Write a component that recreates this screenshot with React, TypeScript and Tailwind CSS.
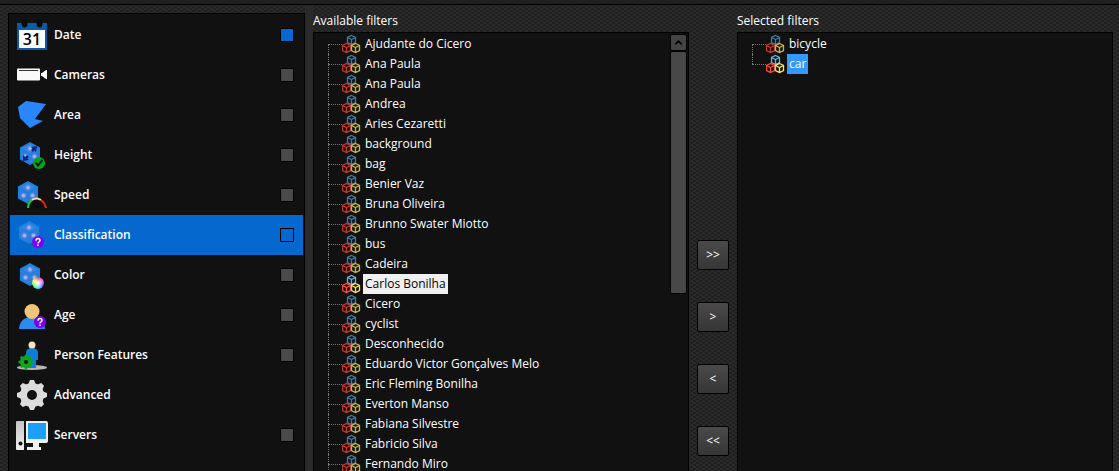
import type { ReactNode } from "react";
import { ChevronUp } from "lucide-react";

type Mark = "on" | "off" | "none";

interface Category {
  label: string;
  icon: ReactNode;
  mark: Mark;
}

function CubeDefs() {
  return (
    <svg className="absolute size-0" aria-hidden="true">
      <defs>
        <radialGradient id="pip">
          <stop offset="0" stopColor="#a9c6fa" />
          <stop offset="0.4" stopColor="#8aaef2" />
          <stop offset="1" stopColor="#4a7ddd" stopOpacity="0" />
        </radialGradient>
        <linearGradient id="steel" x1="0" y1="0" x2="0" y2="1">
          <stop offset="0" stopColor="#c4c4c4" />
          <stop offset="1" stopColor="#f0f0f0" />
        </linearGradient>
      </defs>
    </svg>
  );
}

function Cube({ x = 0, y = 0 }: { x?: number; y?: number }) {
  return (
    <g transform={`translate(${x} ${y})`}>
      <path d="M10 0 20 5.500v12L10 23 0 17.500v-12z" fill="#1385e2" />
      <path d="M10 2 18 6.500 10 11 2 6.500z" fill="#4280df" />
      <path d="M1.500 8 9.500 12.500v8.500l-8-4.500zM18.500 8l-8 4.500v8.500l8-4.500z" fill="#3f77d6" />
      <circle cx="10" cy="6.500" r="3.500" fill="url(#pip)" />
      <circle cx="5.500" cy="14.500" r="3.500" fill="url(#pip)" />
      <circle cx="14.500" cy="14.500" r="3.500" fill="url(#pip)" />
    </g>
  );
}

function Question({ x, y }: { x: number; y: number }) {
  return (
    <g transform={`translate(${x} ${y})`}>
      <circle r="6" fill="#7a00f5" />
      <path d="M-2-1.200q0-2.300 2-2.300t2 1.800q0 1-1 1.600T0 1.600M0 2.400v1.600" fill="none" stroke="#fff" strokeWidth="1.500" />
    </g>
  );
}

function Icon({ children }: { children: ReactNode }) {
  return (
    <svg viewBox="0 0 32 32" className="size-8 shrink-0" aria-hidden="true">
      {children}
    </svg>
  );
}

const gearTeeth = [0, 45, 90, 135, 180, 225, 270, 315];

const categories: Category[] = [
  {
    label: "Date",
    mark: "on",
    icon: (
      <div className="relative size-8 shrink-0">
        <Icon>
          <path d="M1 4h30v27H1z" fill="#0a5ca8" />
          <path d="M3 11h26v18H3z" fill="#fff" />
          <ellipse cx="8.500" cy="4.500" rx="3" ry="4" fill="#0a0a0a" />
          <ellipse cx="23.500" cy="4.500" rx="3" ry="4" fill="#0a0a0a" />
        </Icon>
        <span className="absolute inset-x-0 top-3 text-center text-base leading-4 text-black">31</span>
      </div>
    ),
  },
  {
    label: "Cameras",
    mark: "off",
    icon: (
      <Icon>
        <rect x="1" y="9.500" width="23" height="12" rx="1" fill="#fafafa" />
        <path d="M3 11.500h19" stroke="#333" />
        <path d="M25 14h1l4-3h1v9h-1l-4-3h-1z" fill="#fafafa" />
      </Icon>
    ),
  },
  {
    label: "Area",
    mark: "off",
    icon: (
      <Icon>
        <path d="M2 8 10 2l20 3-11 15 8 2-13 7L4 19z" fill="#2a86ff" />
      </Icon>
    ),
  },
  {
    label: "Height",
    mark: "off",
    icon: (
      <Icon>
        <Cube x={4} y={3} />
        <path d="m9 20 3-3M16 12l3-3" stroke="#06277f" strokeWidth="2.500" />
        <path d="m15 8 6-1-1 6zM7 16v6l6-1z" fill="#06277f" />
        <circle cx="23" cy="24" r="6" fill="#08a51b" />
        <path d="m19.500 23.500 2.500 3 4.500-5.500" fill="none" stroke="#05240a" strokeWidth="2" />
      </Icon>
    ),
  },
  {
    label: "Speed",
    mark: "off",
    icon: (
      <Icon>
        <Cube x={2} y={2} />
        <path d="M11 29a9.500 9.500 0 0 1 19 0z" fill="#0c0c0c" />
        <g fill="none" strokeWidth="2">
          <path d="M12 29q0-5 4-8" stroke="#12d61d" />
          <path d="M16 21q4.500-3 9 0" stroke="#f3e3a0" />
          <path d="M25 21q4 3 5 8" stroke="#e32020" />
        </g>
        <path d="m19 28 6-2-3 3z" fill="#000" />
      </Icon>
    ),
  },
  {
    label: "Classification",
    mark: "off",
    icon: (
      <Icon>
        <Cube x={3} y={2} />
        <Question x={22} y={23} />
      </Icon>
    ),
  },
  {
    label: "Color",
    mark: "off",
    icon: (
      <div className="relative size-8 shrink-0">
        <Icon>
          <Cube x={4} y={4} />
        </Icon>
        <span className="absolute bottom-0.5 right-1 size-3 rounded-full bg-[radial-gradient(circle,#fff_10%,transparent_70%),conic-gradient(#f33,#f4f,#55f,#3df,#4f4,#ff4,#f33)]" />
      </div>
    ),
  },
  {
    label: "Age",
    mark: "off",
    icon: (
      <Icon>
        <path d="M3 30q1-12 13-12t13 12z" fill="#2a8cf0" />
        <circle cx="16" cy="12.500" r="7.500" fill="#efc57c" />
        <Question x={24} y={23} />
      </Icon>
    ),
  },
  {
    label: "Person Features",
    mark: "off",
    icon: (
      <Icon>
        <ellipse cx="16" cy="28.500" rx="15" ry="2.500" fill="#b5b5b5" />
        <path d="M10 21v-7q0-5 6-5t6 5v7h-2v8h-8v-8z" fill="#0e7cd8" />
        <circle cx="16" cy="6" r="3.500" fill="#fae3be" />
        <circle cx="10" cy="23" r="4" fill="none" stroke="#10a51c" strokeWidth="4" />
        {gearTeeth.map((a) => (
          <path key={a} d="M9 15.500h2l1 3H8z" fill="#10a51c" transform={`rotate(${a} 10 23)`} />
        ))}
      </Icon>
    ),
  },
  {
    label: "Advanced",
    mark: "none",
    icon: (
      <Icon>
        <circle cx="16" cy="16" r="8.500" fill="none" stroke="#dcdcdc" strokeWidth="7" />
        {gearTeeth.map((a) => (
          <path key={a} d="M14 1h4l2 5h-8z" fill="#dcdcdc" transform={`rotate(${a} 16 16)`} />
        ))}
      </Icon>
    ),
  },
  {
    label: "Servers",
    mark: "off",
    icon: (
      <Icon>
        <path d="M1 2h7v29H1q-1 0-1-1V3q0-1 1-1z" fill="url(#steel)" />
        <circle cx="4.500" cy="24.500" r="2" fill="#111" />
        <path d="M10 2h20q2 0 2 2v18q0 2-2 2h-7v4h2v3H11v-3h6v-4h-7z" fill="#f0f0f0" />
        <path d="M12 4h18v16H12z" fill="#1ca0ff" />
      </Icon>
    ),
  },
];

const available = [
  "Ajudante do Cicero",
  "Ana Paula",
  "Ana Paula",
  "Andrea",
  "Aries Cezaretti",
  "background",
  "bag",
  "Benier Vaz",
  "Bruna Oliveira",
  "Brunno Swater Miotto",
  "bus",
  "Cadeira",
  "Carlos Bonilha",
  "Cicero",
  "cyclist",
  "Desconhecido",
  "Eduardo Victor Gonçalves Melo",
  "Eric Fleming Bonilha",
  "Everton Manso",
  "Fabiana Silvestre",
  "Fabricio Silva",
  "Fernando Miro",
];

const moves = [
  { text: ">>", label: "Add all" },
  { text: ">", label: "Add" },
  { text: "<", label: "Remove" },
  { text: "<<", label: "Remove all" },
];

const wire = "M4.500 .5 8.500 2.500v5L4.500 9.500.5 7.500v-5zM.5 2.500l4 2 4-2M4.500 4.500v5";

function CubesIcon({ bright }: { bright: boolean }) {
  return (
    <svg viewBox="0 0 20 20" className="size-5 shrink-0" fill="none" strokeWidth="1.300" aria-hidden="true">
      <path d={wire} transform="translate(5 1)" stroke={bright ? "#72b0df" : "#457ca3"} />
      <path d={wire} transform="translate(0 9)" stroke={bright ? "#ff4a3c" : "#c2392d"} />
      <path d={wire} transform="translate(9 9)" stroke={bright ? "#ffe45c" : "#c9b64b"} />
    </svg>
  );
}

interface TreeProps {
  items: string[];
  selected: string;
  highlight: string;
  closed?: boolean;
}

function Tree({ items, selected, highlight, closed }: TreeProps) {
  return (
    <ul className="min-w-0 flex-1 overflow-hidden pl-3.5 pt-px">
      {items.map((item, i) => (
        <li key={i} className="relative flex h-5 items-center">
          <span
            className={`absolute left-3.5 -ml-3.5 border-l border-dotted border-[#777] ${
              i === 0 ? "top-2.5 h-2.5" : closed && i === items.length - 1 ? "top-0 h-2.5" : "top-0 h-5"
            }`}
          />
          <span className="w-3.5 border-t border-dotted border-[#777]" />
          <CubesIcon bright={item === selected} />
          <button
            className={`ml-px h-5 whitespace-nowrap px-0.5 leading-5 ${item === selected ? highlight : "text-white"}`}
          >
            {item}
          </button>
        </li>
      ))}
    </ul>
  );
}

const weave =
  "bg-[#242424] bg-[repeating-conic-gradient(#202020_0_25%,#2a2a2a_0_50%)] bg-size-[6px_4px]";

export default function App() {
  return (
    <div className={`flex h-screen flex-col overflow-hidden font-['Open_Sans','Noto_Sans',sans-serif] text-xs text-white ${weave}`}>
      <CubeDefs />
      <div className="h-[5px] shrink-0 border-b border-black bg-[#202020]" />
      <div className="flex min-h-0 flex-1 pl-2 pr-1.5">
        <nav className="mt-2 w-[297px] shrink-0 overflow-hidden border border-b-0 border-black bg-[#111] px-px pt-px">
          {categories.map((c) => {
            const active = c.label === "Classification";
            return (
              <label
                key={c.label}
                className={`flex h-10 items-center gap-1.5 pl-1.5 pr-[9px] font-semibold ${active ? "bg-[#0468cf]" : ""}`}
              >
                {c.icon}
                <span className="flex-1">{c.label}</span>
                {c.mark !== "none" && (
                  <input
                    type="checkbox"
                    defaultChecked={c.mark === "on"}
                    className={`size-3.5 appearance-none border border-black checked:bg-[#0468cf] ${
                      active ? "bg-[#0468cf]" : "bg-[#4a4a4a]"
                    }`}
                  />
                )}
              </label>
            );
          })}
        </nav>
        <div className="w-2 shrink-0 bg-[#2a2a2a]" />

        <section className="flex min-w-0 flex-1 flex-col pt-1.5">
          <h2 className="h-[21px] shrink-0 leading-5">Available filters</h2>
          <div className="flex min-h-0 flex-1 border border-b-0 border-black bg-[#111]">
            <Tree items={available} selected="Carlos Bonilha" highlight="bg-[#f0f0f0] text-black" />
            <div className="mr-px mt-px flex w-[17px] flex-col">
              <button
                aria-label="Scroll up"
                className="flex h-[17px] items-center justify-center rounded-xs border border-black bg-[#444]"
              >
                <ChevronUp size={11} strokeWidth={4} className="text-black" />
              </button>
              <div className="h-[243px] rounded-xs border border-black bg-[#484848]" />
            </div>
          </div>
        </section>

        <div className="flex w-12 shrink-0 flex-col items-center gap-8 pt-[235px]">
          {moves.map((m) => (
            <button
              key={m.text}
              aria-label={m.label}
              className="h-[30px] w-8 shrink-0 rounded-xs border border-black bg-linear-to-b from-[#4a4a4a] to-[#363636]"
            >
              {m.text}
            </button>
          ))}
        </div>

        <section className="flex min-w-0 flex-1 flex-col pt-1.5">
          <h2 className="h-[21px] shrink-0 leading-5">Selected filters</h2>
          <div className="flex min-h-0 flex-1 border border-b-0 border-black bg-[#111]">
            <Tree items={["bicycle", "car"]} selected="car" highlight="bg-[#3399ff] text-white" closed />
          </div>
        </section>
      </div>
    </div>
  );
}
